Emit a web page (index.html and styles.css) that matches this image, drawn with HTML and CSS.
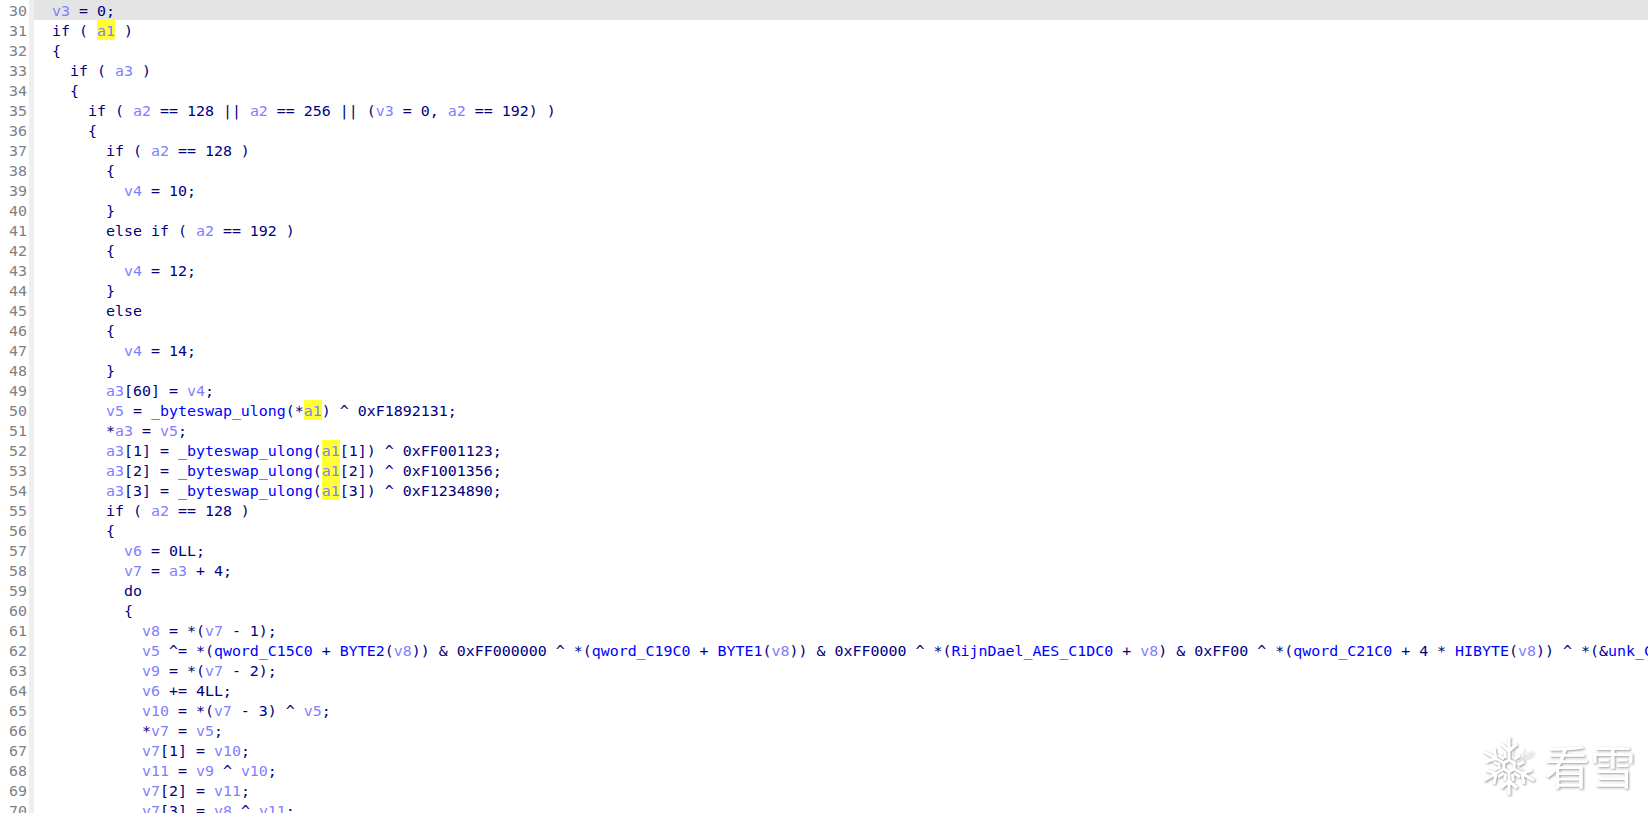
FILE: index.html
```html
<!DOCTYPE html>
<html lang="en">
<head>
<meta charset="utf-8">
<title>Pseudocode</title>
<link rel="stylesheet" href="styles.css">
</head>
<body>
<main class="view">
<div class="row current"><span class="no">30</span><code class="src">  <i>v3</i> = 0;</code></div>
<div class="row"><span class="no">31</span><code class="src">  if ( <mark><i>a1</i></mark> )</code></div>
<div class="row"><span class="no">32</span><code class="src">  {</code></div>
<div class="row"><span class="no">33</span><code class="src">    if ( <i>a3</i> )</code></div>
<div class="row"><span class="no">34</span><code class="src">    {</code></div>
<div class="row"><span class="no">35</span><code class="src">      if ( <i>a2</i> == 128 || <i>a2</i> == 256 || (<i>v3</i> = 0, <i>a2</i> == 192) )</code></div>
<div class="row"><span class="no">36</span><code class="src">      {</code></div>
<div class="row"><span class="no">37</span><code class="src">        if ( <i>a2</i> == 128 )</code></div>
<div class="row"><span class="no">38</span><code class="src">        {</code></div>
<div class="row"><span class="no">39</span><code class="src">          <i>v4</i> = 10;</code></div>
<div class="row"><span class="no">40</span><code class="src">        }</code></div>
<div class="row"><span class="no">41</span><code class="src">        else if ( <i>a2</i> == 192 )</code></div>
<div class="row"><span class="no">42</span><code class="src">        {</code></div>
<div class="row"><span class="no">43</span><code class="src">          <i>v4</i> = 12;</code></div>
<div class="row"><span class="no">44</span><code class="src">        }</code></div>
<div class="row"><span class="no">45</span><code class="src">        else</code></div>
<div class="row"><span class="no">46</span><code class="src">        {</code></div>
<div class="row"><span class="no">47</span><code class="src">          <i>v4</i> = 14;</code></div>
<div class="row"><span class="no">48</span><code class="src">        }</code></div>
<div class="row"><span class="no">49</span><code class="src">        <i>a3</i>[60] = <i>v4</i>;</code></div>
<div class="row"><span class="no">50</span><code class="src">        <i>v5</i> = <b>_byteswap_ulong</b>(*<mark><i>a1</i></mark>) ^ 0xF1892131;</code></div>
<div class="row"><span class="no">51</span><code class="src">        *<i>a3</i> = <i>v5</i>;</code></div>
<div class="row"><span class="no">52</span><code class="src">        <i>a3</i>[1] = <b>_byteswap_ulong</b>(<mark><i>a1</i></mark>[1]) ^ 0xFF001123;</code></div>
<div class="row"><span class="no">53</span><code class="src">        <i>a3</i>[2] = <b>_byteswap_ulong</b>(<mark><i>a1</i></mark>[2]) ^ 0xF1001356;</code></div>
<div class="row"><span class="no">54</span><code class="src">        <i>a3</i>[3] = <b>_byteswap_ulong</b>(<mark><i>a1</i></mark>[3]) ^ 0xF1234890;</code></div>
<div class="row"><span class="no">55</span><code class="src">        if ( <i>a2</i> == 128 )</code></div>
<div class="row"><span class="no">56</span><code class="src">        {</code></div>
<div class="row"><span class="no">57</span><code class="src">          <i>v6</i> = 0LL;</code></div>
<div class="row"><span class="no">58</span><code class="src">          <i>v7</i> = <i>a3</i> + 4;</code></div>
<div class="row"><span class="no">59</span><code class="src">          do</code></div>
<div class="row"><span class="no">60</span><code class="src">          {</code></div>
<div class="row"><span class="no">61</span><code class="src">            <i>v8</i> = *(<i>v7</i> - 1);</code></div>
<div class="row"><span class="no">62</span><code class="src">            <i>v5</i> ^= *(<b>qword_C15C0</b> + <b>BYTE2</b>(<i>v8</i>)) &amp; 0xFF000000 ^ *(<b>qword_C19C0</b> + <b>BYTE1</b>(<i>v8</i>)) &amp; 0xFF0000 ^ *(<b>RijnDael_AES_C1DC0</b> + <i>v8</i>) &amp; 0xFF00 ^ *(<b>qword_C21C0</b> + 4 * <b>HIBYTE</b>(<i>v8</i>)) ^ *(&amp;<b>unk_C25C0</b> + <i>v5</i>);</code></div>
<div class="row"><span class="no">63</span><code class="src">            <i>v9</i> = *(<i>v7</i> - 2);</code></div>
<div class="row"><span class="no">64</span><code class="src">            <i>v6</i> += 4LL;</code></div>
<div class="row"><span class="no">65</span><code class="src">            <i>v10</i> = *(<i>v7</i> - 3) ^ <i>v5</i>;</code></div>
<div class="row"><span class="no">66</span><code class="src">            *<i>v7</i> = <i>v5</i>;</code></div>
<div class="row"><span class="no">67</span><code class="src">            <i>v7</i>[1] = <i>v10</i>;</code></div>
<div class="row"><span class="no">68</span><code class="src">            <i>v11</i> = <i>v9</i> ^ <i>v10</i>;</code></div>
<div class="row"><span class="no">69</span><code class="src">            <i>v7</i>[2] = <i>v11</i>;</code></div>
<div class="row"><span class="no">70</span><code class="src">            <i>v7</i>[3] = <i>v8</i> ^ <i>v11</i>;</code></div>
</main>
<aside class="mark-logo">
<svg class="flake" viewBox="-26 -30 52 60" aria-hidden="true">
<defs>
<path id="a" d="M0-7V-29M0-15L-8-22M0-15L8-22M-5-7L-11-11M5-7L11-11"/>
<path id="t" d="M-2-7V-27M0-7V-29M2-7V-27M0-15L-8-22M-5-7L-11-11M5-7L11-11"/>
</defs>
<use href="#a"/><use href="#a" transform="rotate(120)"/><use href="#a" transform="rotate(180)"/><use href="#a" transform="rotate(240)"/><use href="#a" transform="rotate(300)"/>
<use href="#t" class="thin" transform="rotate(60)"/>
<path d="M0-6L5.2-3V3L0 6L-5.2 3V-3Z"/>
</svg>
<span class="brand">看雪</span>
</aside>
</body>
</html>
```
FILE: styles.css
```css
html, body { margin: 0; height: 100%; background: #fff; overflow: hidden; }
.view { height: 813px; overflow: hidden; }
.row { display: flex; height: 20px; white-space: pre; }
.no { flex: none; width: 27px; padding-right: 2px; text-align: right; color: #808080; font: 14.95px/22px "DejaVu Sans Mono", monospace; border-right: 5px solid #efefef; overflow: hidden; }
.src { display: block; flex: 1; min-width: 0; overflow: hidden; font: 14.95px/22px "DejaVu Sans Mono", monospace; color: #000080; }
.current .src { background: #e4e4e4; }
i { font-style: normal; color: #8080ff; }
b { font-weight: normal; color: #0000ff; }
mark { display: inline-block; height: 20px; vertical-align: top; background: #ffff33; color: inherit; }
.mark-logo { position: absolute; left: 1483px; top: 736px; display: flex; align-items: center; gap: 9px; color: #fff; filter: drop-shadow(1px 1px 1px rgba(0,0,0,.4)); }
.flake { width: 52px; height: 60px; fill: none; stroke: #fff; stroke-width: 3; }
.flake .thin { stroke-width: .8; opacity: .85; }
.brand { margin-top: -4px; font: 46px/1 "Noto Sans CJK SC", sans-serif; }
```
